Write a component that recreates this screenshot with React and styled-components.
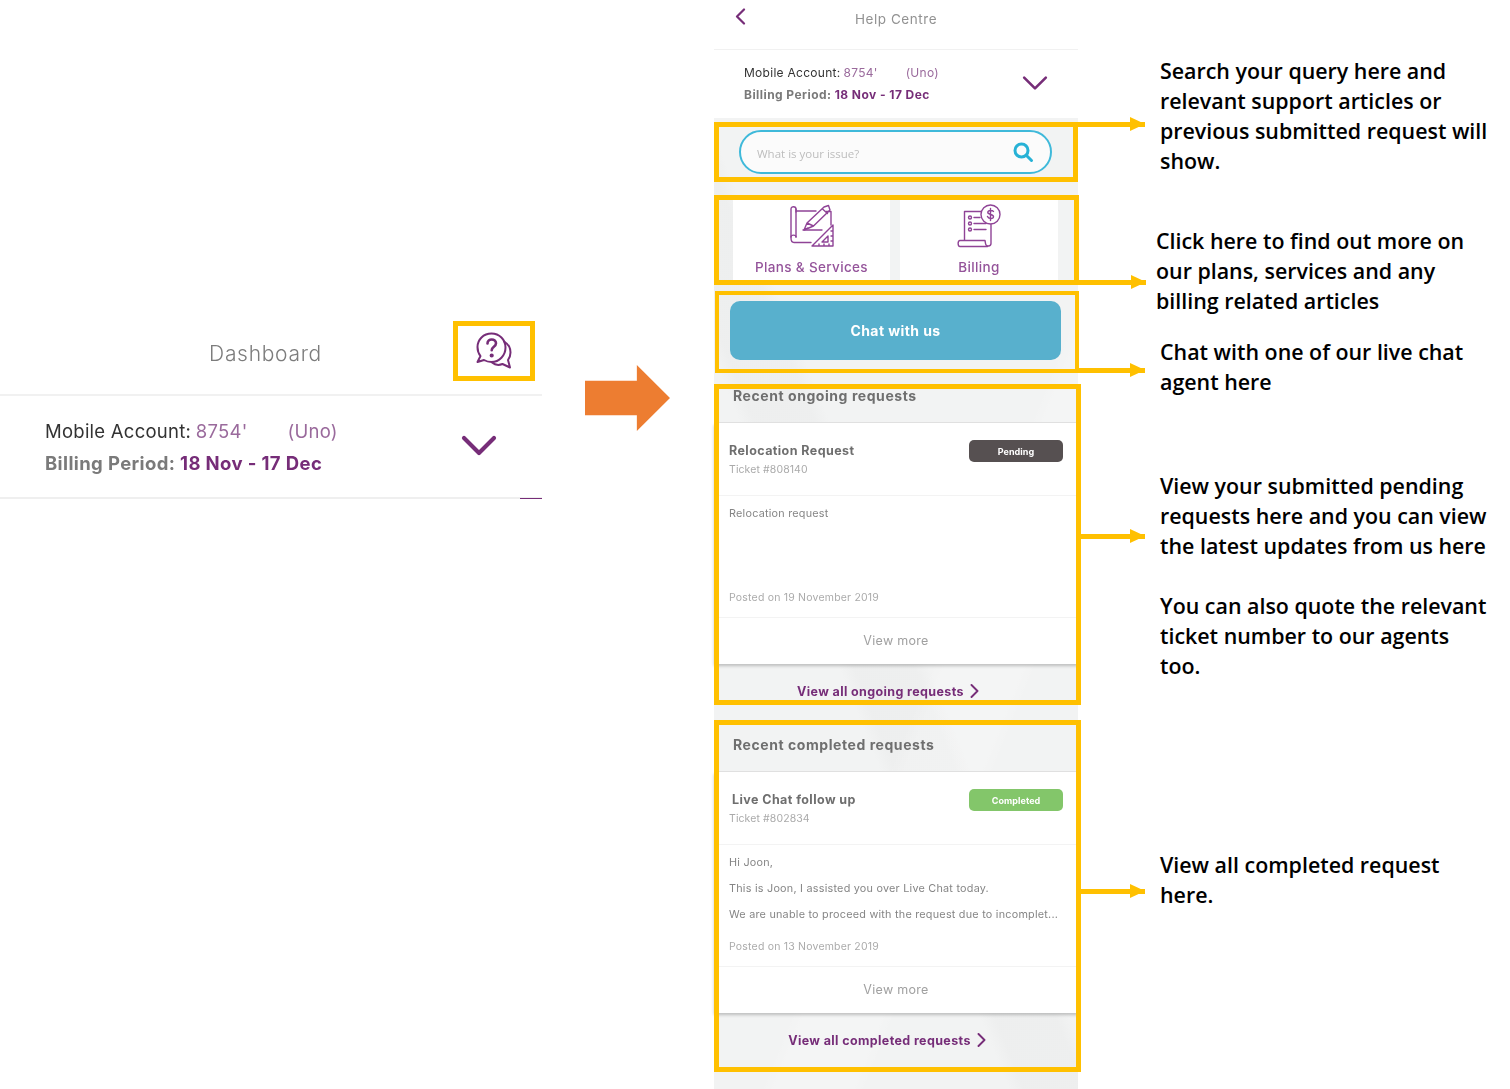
import React from "react";
import styled, { createGlobalStyle } from "styled-components";

const PURPLE = "#762d78";
const AMBER = "#ffc000";

const Global = createGlobalStyle`
  html, body { margin: 0; padding: 0; background: #fff; }
  body { font-family: "Inter", "Liberation Sans", sans-serif; }
  * { box-sizing: border-box; }
`;

const Slide = styled.div`
  display: grid;
  grid-template-columns: 542px 172px 364px 1fr;
  width: 1510px;
  height: 1089px;
  overflow: hidden;
  background: #fff;
`;

const Soft = styled.div`
  filter: blur(0.35px);
`;

/* ---------- left panel ---------- */
const LeftPanel = styled.section`
  position: relative;
  padding-top: 311px;
`;
const DashHeader = styled.div`
  display: flex;
  align-items: center;
  height: 85px;
  padding-left: 150px;
  border-bottom: 2px solid #f1f1f1;
`;
const DashTitle = styled.div`
  width: 231px;
  padding-top: 1px;
  text-align: center;
  font-size: 21px;
  font-weight: 300;
  letter-spacing: 0.7px;
  color: #7c7c7c;
`;
const DashIcon = styled.svg`
  width: 38px;
  height: 40px;
  margin-left: 94px;
  margin-top: -3px;
`;
const DashAccount = styled.div`
  position: relative;
  display: flex;
  align-items: center;
  justify-content: space-between;
  height: 103px;
  padding: 0 45px 0 45px;
  border-bottom: 2px solid #efefef;
`;
const BottomTick = styled.span`
  position: absolute;
  right: 0;
  bottom: -2px;
  width: 22px;
  height: 1.5px;
  background: ${PURPLE};
`;
const AccountLines = styled.div`
  display: flex;
  flex-direction: column;
  gap: ${(p) => p.$gap}px;
  font-size: ${(p) => p.$size}px;
  line-height: ${(p) => p.$line}px;
`;
const AccountLine = styled.div`
  display: flex;
  white-space: nowrap;
  color: #333;
  font-weight: 400;
  letter-spacing: ${(p) => p.$track}px;
`;
const BillingLine = styled.div`
  white-space: nowrap;
  color: #7a7a7a;
  font-weight: 700;
  letter-spacing: ${(p) => p.$track}px;
`;
const AccountNumber = styled.span`
  color: #9a6a9c;
  margin-left: 0.25em;
  margin-right: ${(p) => p.$gap}px;
`;
const PurpleBold = styled.span`
  color: ${PURPLE};
`;
const LightPlain = styled.span`
  color: #9a6a9c;
`;
const Chevron = styled.svg`
  display: block;
  flex: none;
  width: ${(p) => p.$w}px;
  height: ${(p) => p.$h}px;
  margin: ${(p) => p.$m || 0};
`;

/* ---------- middle arrow ---------- */
const MiddleColumn = styled.div`
  padding: 365px 0 0 43px;
`;
const BigArrow = styled.div`
  width: 85px;
  height: 66px;
  background: #ed7d31;
  clip-path: polygon(0 24%, 61% 24%, 61% 0, 100% 50%, 61% 100%, 61% 76%, 0 76%);
`;

/* ---------- phone ---------- */
const PhoneColumn = styled.section`
  position: relative;
`;
const PhoneHeader = styled.header`
  display: flex;
  align-items: center;
  height: 50px;
  padding: 0 21px 12px 21px;
  border-bottom: 1px solid #f1f1f1;
`;
const PhoneTitle = styled.div`
  flex: 1;
  text-align: center;
  font-size: 13.5px;
  font-weight: 400;
  letter-spacing: 0.55px;
  color: #929292;
  padding-right: 11px;
`;
const PhoneAccount = styled.div`
  display: flex;
  align-items: center;
  justify-content: space-between;
  height: 68px;
  padding: 0 30px 0 30px;
`;
const PhoneBody = styled.div`
  height: 971px;
  padding-top: 12px;
  background:
    linear-gradient(112deg, transparent 0 58%, rgba(255,255,255,.18) 60% 70%, transparent 72%),
    linear-gradient(68deg, transparent 0 39%, rgba(228,229,229,.3) 41% 49%, transparent 51%),
    #f2f3f3;
`;
const SearchPill = styled.div`
  display: flex;
  align-items: center;
  justify-content: space-between;
  height: 44px;
  margin: 0 26px 0 25px;
  padding: 2px 16px 0 16px;
  border: 2px solid #3fb9da;
  border-radius: 22px;
  background: #fbfbfb;
`;
const SearchHint = styled.span`
  font-family: "Open Sans", sans-serif;
  font-size: 11.5px;
  color: #bdbdbd;
`;
const SearchIcon = styled.svg`
  width: 22px;
  height: 22px;
  margin-top: -2px;
`;
const Tiles = styled.div`
  display: grid;
  grid-template-columns: 157px 158px;
  gap: 10px;
  margin: 22px 20px 0 19px;
`;
const Tile = styled.div`
  display: flex;
  flex-direction: column;
  align-items: center;
  height: 84px;
  padding-top: 8px;
  background: #fff;
`;
const TileIcon = styled.svg`
  display: block;
  width: 45px;
  height: 44px;
  margin-left: 1px;
`;
const TileLabel = styled.div`
  margin-top: 11px;
  font-size: 13.5px;
  line-height: 16px;
  letter-spacing: 0.35px;
  font-weight: 500;
  color: #94539a;
`;
const ChatButton = styled.div`
  display: flex;
  align-items: center;
  justify-content: center;
  height: 59px;
  margin: 21px 17px 0 16px;
  border-radius: 10px;
  background: #58b0cd;
  color: #fff;
  font-size: 14px;
  letter-spacing: 0.42px;
  font-weight: 700;
`;
const SectionTitle = styled.div`
  padding: ${(p) => p.$top}px 19px ${(p) => p.$bottom}px 19px;
  font-size: 14px;
  line-height: 18px;
  font-weight: 700;
  letter-spacing: 0.56px;
  color: #6f6f6f;
  border-bottom: 1px solid #e3e3e3;
`;
const Card = styled.div`
  background: #fff;
  box-shadow: 0 2px 3px rgba(0, 0, 0, 0.22);
`;
const TicketRow = styled.div`
  display: flex;
  align-items: flex-start;
  justify-content: space-between;
  height: 73px;
  padding: 17px 15px 0 15px;
  border-bottom: 1px solid #f3f3f3;
`;
const TicketHead = styled.div`
  padding-top: 1px;
`;
const TicketTitle = styled.div`
  margin-left: ${(p) => p.$indent || 0}px;
  font-size: 12.5px;
  line-height: 20px;
  font-weight: 700;
  letter-spacing: 0.42px;
  color: #6e6e6e;
`;
const TicketNo = styled.div`
  margin-top: 1px;
  font-size: 10.5px;
  line-height: 16px;
  letter-spacing: 0.1px;
  color: #aaaaaa;
`;
const Badge = styled.div`
  display: flex;
  align-items: center;
  justify-content: center;
  width: 94px;
  height: 22px;
  border-radius: 5px;
  color: #fff;
  font-size: 9px;
  font-weight: 700;
  letter-spacing: 0.05px;
  background: ${(p) => p.$bg};
`;
const MessageBody = styled.div`
  display: flex;
  flex-direction: column;
  height: 122px;
  padding: 11px 15px 12px 15px;
  border-bottom: 1px solid #f3f3f3;
`;
const MessageLine = styled.div`
  font-size: 10.8px;
  line-height: 14px;
  letter-spacing: 0.24px;
  color: #858585;
  white-space: nowrap;
  margin-bottom: ${(p) => p.$after || 0}px;
`;
const Posted = styled.div`
  margin-top: auto;
  font-size: 10.5px;
  line-height: 14px;
  letter-spacing: 0.2px;
  color: #ababab;
`;
const ViewMore = styled.div`
  height: 46px;
  padding-bottom: 2px;
  display: flex;
  align-items: center;
  justify-content: center;
  font-size: 12.5px;
  letter-spacing: 0.3px;
  color: #a0a0a0;
`;
const ViewAll = styled.div`
  display: flex;
  align-items: center;
  justify-content: center;
  gap: 6px;
  height: 54px;
  padding-right: ${(p) => p.$shift || 0}px;
  font-size: 12.5px;
  font-weight: 700;
  letter-spacing: 0.38px;
  color: ${PURPLE};
`;

/* ---------- overlays ---------- */
const Highlight = styled.div`
  position: absolute;
  left: ${(p) => p.$x}px;
  top: ${(p) => p.$y}px;
  width: ${(p) => p.$w}px;
  height: ${(p) => p.$h}px;
  border: ${(p) => p.$b || 5}px solid ${AMBER};
`;
const Connector = styled.div`
  position: absolute;
  left: ${(p) => p.$x}px;
  top: ${(p) => p.$y}px;
  width: ${(p) => p.$w}px;
  height: 5px;
  background: ${AMBER};
  &::after {
    content: "";
    position: absolute;
    right: 0;
    top: -5px;
    border-left: 15px solid ${AMBER};
    border-top: 7.5px solid transparent;
    border-bottom: 7.5px solid transparent;
  }
`;

/* ---------- annotations ---------- */
const Notes = styled.aside`
  padding: 56px 0 0 82px;
`;
const Note = styled.p`
  margin: ${(p) => p.$gap || 0}px 0 0 ${(p) => p.$shift || 0}px;
  width: 332px;
  font-family: "Open Sans", sans-serif;
  font-size: 21.4px;
  line-height: 30px;
  font-weight: 600;
  color: #000;
`;

/* ---------- drawings ---------- */
const ChevDown = ({ w, h, m, sw = 3 }) => (
  <Chevron $w={w} $h={h} $m={m} viewBox="0 0 24 14" fill="none" stroke={PURPLE} strokeWidth={sw} strokeLinecap="round" strokeLinejoin="round">
    <path d="M2 2l10 10L22 2" />
  </Chevron>
);
const ChevRight = () => (
  <Chevron $w={9} $h={14} viewBox="0 0 9 14" fill="none" stroke={PURPLE} strokeWidth="1.9" strokeLinecap="round" strokeLinejoin="round">
    <path d="M1.5 1l6 6-6 6" />
  </Chevron>
);
const ChevLeft = () => (
  <Chevron $w={11} $h={17} $m="-4px 0 0 0" viewBox="0 0 11 17" fill="none" stroke={PURPLE} strokeWidth="2.2" strokeLinecap="round" strokeLinejoin="round">
    <path d="M9 1.5L2 8.5l7 7" />
  </Chevron>
);

const PlansIcon = () => (
  <TileIcon viewBox="0 0 45 44" fill="none" stroke="#8f4396" strokeWidth="1.4" strokeLinecap="round" strokeLinejoin="round">
    <path d="M6 8V5c0-3-5-3-5 0v29c0 3 1.500 4.500 3 4.500h17" />
    <path d="M1 33c0-2.500 5-2.500 5 0" />
    <path d="M6 5v28M6 7h20M36 7.500h5V21" />
    <path d="M14 26l3-7L34 3l4.500-1.500 1.500 4.500L23.500 22zM17 19l6.500 3M32.500 5l5 4.500M14 26l4-2" />
    <path d="M13 26h19" />
    <path d="M22 42L43 21v21zM32 38l6-6v6zM29 42v-2M34 42v-2M39 42v-2M43 37h-2M43 32h-2M43 27h-2" />
  </TileIcon>
);
const BillingIcon = () => (
  <TileIcon viewBox="0 0 45 44" fill="none" stroke="#8f4396" strokeWidth="1.4" strokeLinecap="round" strokeLinejoin="round">
    <circle cx="33.500" cy="10.500" r="9.500" />
    <path d="M36.500 7.500c-.7-1.300-5.500-1.800-5.700.8-.2 2.700 5.800 1.700 5.700 4.400-.1 2.600-5.200 2.100-6-.2M33.500 4.500v12" />
    <path d="M24 7.500H7.500v29M34 20.500v19c0 3-5 3.500-5.500 0-.2-1.500-.5-3-.5-3H3c-2.500 0-2.500 6 0 6h27.500" />
    <circle cx="13" cy="13.500" r="1.500" />
    <circle cx="13" cy="19.500" r="1.500" />
    <circle cx="13" cy="25.500" r="1.500" />
    <path d="M17 13.500h6M17 19.500h12M17 25.500h12" />
  </TileIcon>
);

const TicketCard = ({ title, indent, no, status, bg, children, posted }) => (
  <Card>
    <TicketRow>
      <TicketHead>
        <TicketTitle $indent={indent}>{title}</TicketTitle>
        <TicketNo>{no}</TicketNo>
      </TicketHead>
      <Badge $bg={bg}>{status}</Badge>
    </TicketRow>
    <MessageBody>
      {children}
      <Posted>{posted}</Posted>
    </MessageBody>
    <ViewMore>View more</ViewMore>
  </Card>
);

export default function App() {
  return (
    <>
      <Global />
      <Slide>
        <LeftPanel>
          <Soft>
            <DashHeader>
              <DashTitle>Dashboard</DashTitle>
              <DashIcon viewBox="0 0 38 40" fill="none" stroke={PURPLE} strokeWidth="2" strokeLinecap="round" strokeLinejoin="round">
                <path d="M16.500 2.500C8.500 2.500 2.500 8.500 2.500 16c0 3.500 1 6.500 3 9L2.500 31l6.500-2c2.200 1.300 4.800 2 7.500 2 7.800 0 14-6.500 14-14.500S24.300 2.500 16.500 2.500z" />
                <path d="M29 10.500c4.200 2.500 6.500 6.500 6.500 11 0 3-1 5.500-2.500 7.500l2 7.500-7.500-3.500c-3 1.200-7.500 1-10.500-1.500" />
                <path d="M12.500 12.500c0-2.500 2-4 4.200-4 2.400 0 4.300 1.500 4.300 3.800 0 3.500-4.300 3.500-4.300 7" strokeWidth="2.600" />
                <circle cx="16.700" cy="24.500" r="1.100" fill={PURPLE} />
              </DashIcon>
            </DashHeader>
            <DashAccount>
              <AccountLines $gap={10} $size={18.500} $line={22}>
                <AccountLine $track={0.25}>
                  Mobile Account:<AccountNumber $gap={40}>8754'</AccountNumber><LightPlain>(Uno)</LightPlain>
                </AccountLine>
                <BillingLine $track={0.38}>
                  Billing Period: <PurpleBold>18 Nov - 17 Dec</PurpleBold>
                </BillingLine>
              </AccountLines>
              <ChevDown w={36} h={21} m="-3px 0 0 0" sw={2.800} />
              <BottomTick />
            </DashAccount>
          </Soft>
          <Highlight $x={453} $y={321} $w={82} $h={60} />
        </LeftPanel>

        <MiddleColumn>
          <BigArrow />
        </MiddleColumn>

        <PhoneColumn>
          <Soft>
            <PhoneHeader>
              <ChevLeft />
              <PhoneTitle>Help Centre</PhoneTitle>
            </PhoneHeader>
            <PhoneAccount>
              <AccountLines $gap={6} $size={12} $line={16}>
                <AccountLine $track={0.28}>
                  Mobile Account:<AccountNumber $gap={28}>8754'</AccountNumber><LightPlain>(Uno)</LightPlain>
                </AccountLine>
                <BillingLine $track={0.44}>
                  Billing Period: <PurpleBold>18 Nov - 17 Dec</PurpleBold>
                </BillingLine>
              </AccountLines>
              <ChevDown w={26} h={16} m="-3px 0 0 2px" sw={2.400} />
            </PhoneAccount>
            <PhoneBody>
              <SearchPill>
                <SearchHint>What is your issue?</SearchHint>
                <SearchIcon viewBox="0 0 22 22" fill="none" stroke="#27b2d6" strokeWidth="3" strokeLinecap="round">
                  <circle cx="9.500" cy="9.500" r="6.500" />
                  <path d="M14.500 14.500l5 5" />
                </SearchIcon>
              </SearchPill>
              <Tiles>
                <Tile>
                  <PlansIcon />
                  <TileLabel>Plans &amp; Services</TileLabel>
                </Tile>
                <Tile>
                  <BillingIcon />
                  <TileLabel>Billing</TileLabel>
                </Tile>
              </Tiles>
              <ChatButton>Chat with us</ChatButton>

              <SectionTitle $top={27} $bottom={17}>Recent ongoing requests</SectionTitle>
              <TicketCard
                title="Relocation Request"
                no="Ticket #808140"
                status="Pending"
                bg="#565051"
                posted="Posted on 19 November 2019"
              >
                <MessageLine>Relocation request</MessageLine>
              </TicketCard>
              <ViewAll $shift={16}>
                View all ongoing requests <ChevRight />
              </ViewAll>

              <SectionTitle $top={18} $bottom={17}>Recent completed requests</SectionTitle>
              <TicketCard
                title="Live Chat follow up"
                indent={3}
                no="Ticket #802834"
                status="Completed"
                bg="#83c66a"
                posted="Posted on 13 November 2019"
              >
                <MessageLine $after={12}>Hi Joon,</MessageLine>
                <MessageLine $after={12}>This is Joon, I assisted you over Live Chat today.</MessageLine>
                <MessageLine>We are unable to proceed with the request due to incomplet...</MessageLine>
              </TicketCard>
              <ViewAll $shift={18}>
                View all completed requests <ChevRight />
              </ViewAll>
            </PhoneBody>
          </Soft>

          <Highlight $x={0} $y={122} $w={364} $h={60} />
          <Highlight $x={0} $y={195} $w={365} $h={90} />
          <Highlight $x={1} $y={291} $w={364} $h={82} $b={4} />
          <Highlight $x={0} $y={384} $w={367} $h={321} />
          <Highlight $x={0} $y={720} $w={367} $h={352} />
          <Connector $x={364} $y={122} $w={67} />
          <Connector $x={365} $y={280} $w={67} />
          <Connector $x={365} $y={368} $w={66} />
          <Connector $x={367} $y={534} $w={64} />
          <Connector $x={367} $y={889} $w={64} />
        </PhoneColumn>

        <Notes>
          <Note>Search your query here and relevant support articles or previous submitted request will show.</Note>
          <Note $gap={50} $shift={-4}>Click here to find out more on our plans, services and any billing related articles</Note>
          <Note $gap={21}>Chat with one of our live chat agent here</Note>
          <Note $gap={74}>View your submitted pending requests here and you can view the latest updates from us here</Note>
          <Note $gap={30}>You can also quote the relevant ticket number to our agents too.</Note>
          <Note $gap={169}>View all completed request here.</Note>
        </Notes>
      </Slide>
    </>
  );
}
